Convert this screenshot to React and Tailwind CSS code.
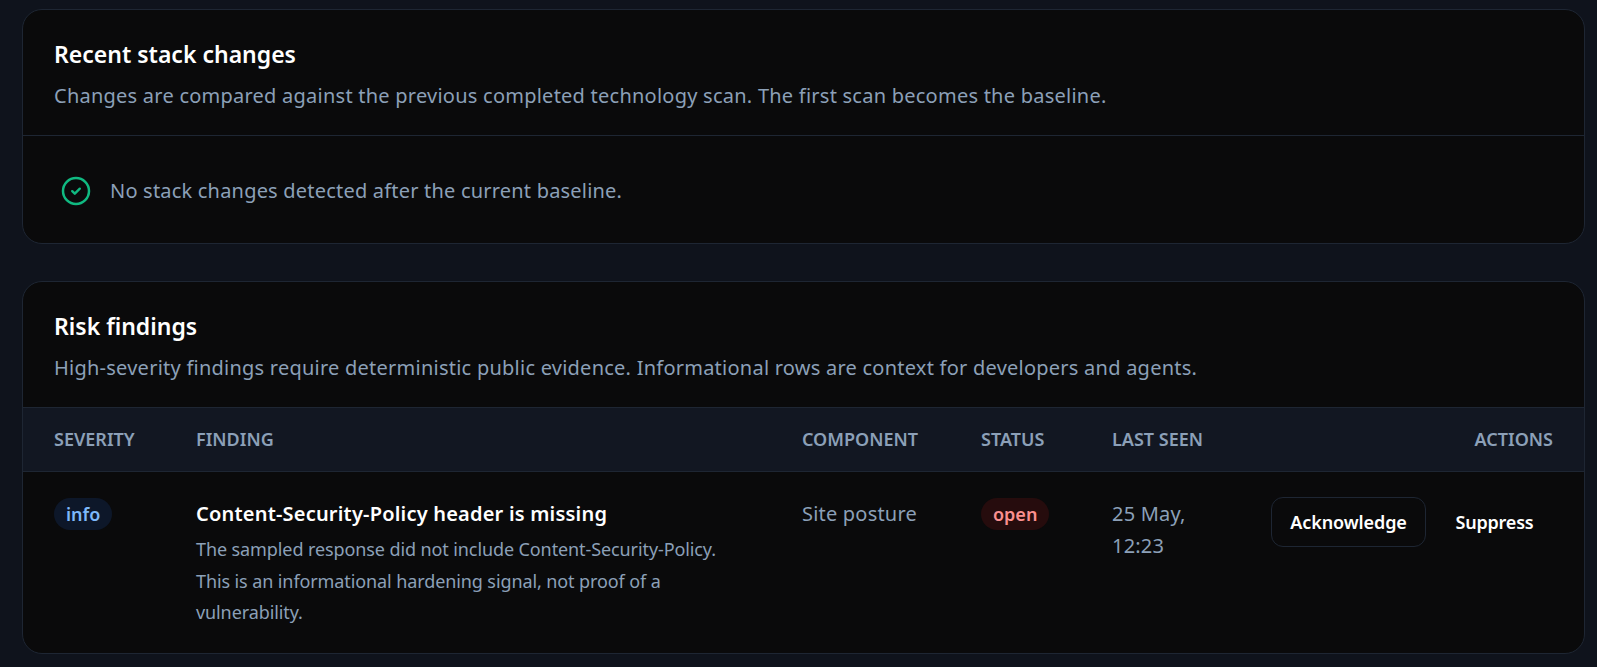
import React from "react";

const font = { fontFamily: '"Noto Sans", sans-serif' };

function CheckIcon() {
  return (
    <svg width="30" height="30" viewBox="0 0 30 30" fill="none" className="shrink-0">
      <circle cx="15" cy="15" r="13" stroke="#10b981" strokeWidth="2.5" />
      <path d="M11.2 15.2l2.6 2.5 5-5" stroke="#10b981" strokeWidth="2.4" strokeLinecap="round" strokeLinejoin="round" />
    </svg>
  );
}

function CardHead({ title, sub }) {
  return (
    <div className="pl-[31px] pt-[27px]">
      <h2 className="text-[23px] leading-[34px] font-semibold text-white">{title}</h2>
      <p className="mt-[8px] text-[20px] leading-[34px] tracking-[0.24px] text-[#8ca0b8]">{sub}</p>
    </div>
  );
}

export default function App() {
  return (
    <div className="h-[667px] overflow-hidden bg-[#0f131c] pl-[22px] pr-[12px] pt-[9px]" style={font}>
      <section className="h-[235px] rounded-[20px] border border-[#1e2633] bg-[#0a0a0b]">
        <div className="h-[126px] border-b border-[#1e2633]">
          <CardHead title="Recent stack changes" sub="Changes are compared against the previous completed technology scan. The first scan becomes the baseline." />
        </div>
        <div className="flex items-center gap-[19px] pl-[38px] pt-[40px]">
          <CheckIcon />
          <span className="text-[20px] leading-[28px] tracking-[0.2px] text-[#8ca0b8]">No stack changes detected after the current baseline.</span>
        </div>
      </section>

      <section className="mt-[37px] h-[373px] overflow-hidden rounded-[20px] border border-[#1e2633] bg-[#0a0a0b]">
        <div className="h-[125px]">
          <CardHead title="Risk findings" sub="High-severity findings require deterministic public evidence. Informational rows are context for developers and agents." />
        </div>
        <div className="grid h-[65px] grid-cols-[142px_606px_179px_131px_1fr] items-center border-y border-[#1e2633] bg-[#121722] px-[31px] text-[18px] font-semibold text-[#8ca0b8]">
          <span>SEVERITY</span>
          <span>FINDING</span>
          <span>COMPONENT</span>
          <span>STATUS</span>
          <span className="flex justify-between">
            <span>LAST SEEN</span>
            <span>ACTIONS</span>
          </span>
        </div>
        <div className="grid grid-cols-[142px_606px_179px_131px_1fr] px-[31px] pt-[26px]">
          <div>
            <span className="inline-block rounded-full bg-[#0d1729] px-[12px] text-[18px] leading-[32px] font-semibold text-[#7db8fa]">info</span>
          </div>
          <div>
            <div className="text-[20px] leading-[32px] font-semibold tracking-[0.2px] text-white">Content-Security-Policy header is missing</div>
            <p className="mt-[4px] w-[540px] text-[18px] leading-[31.5px] tracking-[-0.1px] text-[#8ca0b8]">The sampled response did not include Content-Security-Policy. This is an informational hardening signal, not proof of a vulnerability.</p>
          </div>
          <div className="text-[20px] leading-[31.5px] tracking-[0.2px] text-[#8ca0b8]">Site posture</div>
          <div>
            <span className="inline-block rounded-full bg-[#260c0d] px-[12px] text-[18px] leading-[32px] font-semibold text-[#fb8f8f]">open</span>
          </div>
          <div className="flex justify-between">
            <div className="w-[100px] text-[20px] leading-[31.5px] tracking-[0.2px] text-[#8ca0b8]">25 May, 12:23</div>
            <div className="-mt-[1px] flex h-[50px] items-center gap-[10px]">
              <button className="h-[50px] w-[155px] rounded-[12px] border border-[#1e2633] text-[18px] font-semibold tracking-[-0.1px] text-white">Acknowledge</button>
              <button className="h-[50px] w-[117px] text-[18px] font-semibold tracking-[-0.2px] text-white">Suppress</button>
            </div>
          </div>
        </div>
      </section>
    </div>
  );
}
